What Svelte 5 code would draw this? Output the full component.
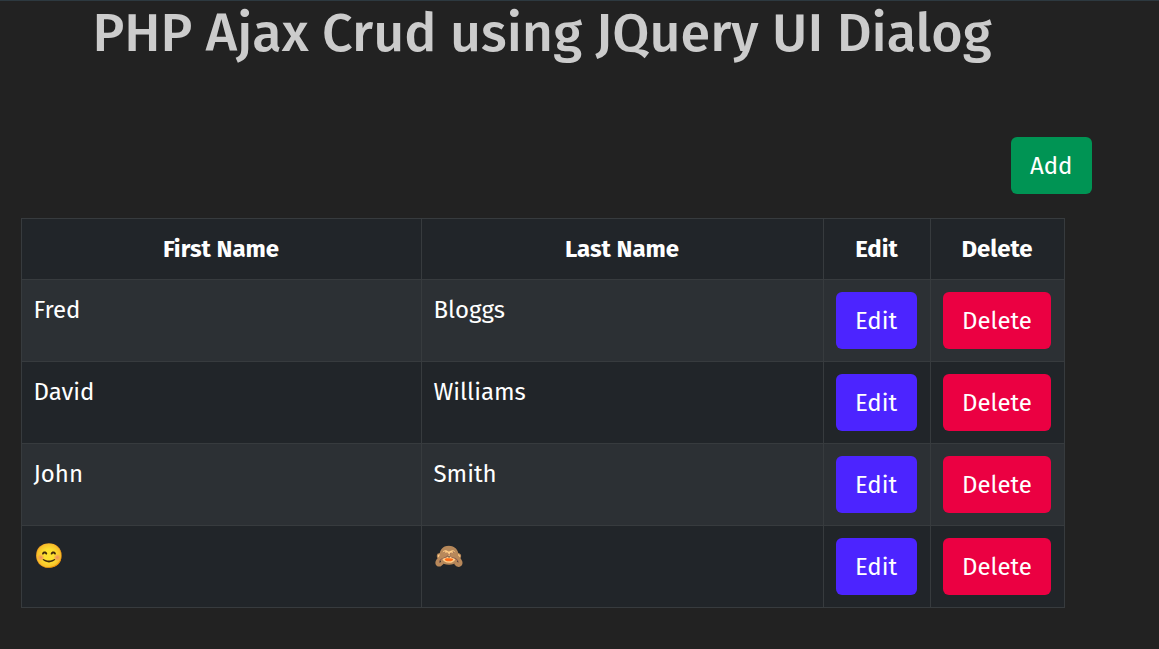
<script>
  const people = [
    { first: 'Fred', last: 'Bloggs' },
    { first: 'David', last: 'Williams' },
    { first: 'John', last: 'Smith' },
    { first: '😊', last: '🙈' }
  ];
</script>

<main>
  <h1>PHP Ajax Crud using JQuery UI Dialog</h1>
  <div class="toolbar"><button class="add">Add</button></div>
  <table>
    <colgroup>
      <col class="c1" /><col class="c2" /><col class="c3" /><col class="c4" />
    </colgroup>
    <thead>
      <tr><th>First Name</th><th>Last Name</th><th>Edit</th><th>Delete</th></tr>
    </thead>
    <tbody>
      {#each people as p}
        <tr>
          <td>{p.first}</td>
          <td>{p.last}</td>
          <td><button class="edit">Edit</button></td>
          <td><button class="delete">Delete</button></td>
        </tr>
      {/each}
    </tbody>
  </table>
</main>

<style>
  :global(body) { background: #222; }
  main {
    box-sizing: border-box;
    height: 649px;
    overflow: hidden;
    border-top: 1px solid #2d3940;
    font: 24px/36px 'Fira Sans', 'Noto Sans', 'Noto Color Emoji', sans-serif;
    color: #fff;
    background: #222;
  }
  h1 {
    margin: 0 0 0 92.5px;
    height: 136px;
    font-size: 53.85px;
    line-height: 64px;
    font-weight: 500;
    color: #ccc;
    white-space: nowrap;
  }
  .toolbar { display: flex; justify-content: flex-end; height: 81px; padding-right: 67px; }
  button {
    display: block;
    box-sizing: border-box;
    height: 57px;
    padding: 0 0.5px 0 0;
    border: 0;
    border-radius: 6px;
    font: inherit;
    color: #fff;
  }
  .add { width: 81px; background: #009454; }
  .edit { width: 81px; padding-right: 1px; background: #4c24ff; }
  .delete { width: 108px; padding-right: 0; background: #eb0042; }
  table {
    width: 1044px;
    margin-left: 21px;
    border-collapse: separate;
    border-spacing: 0;
    table-layout: fixed;
    border-top: 1px solid #373b3e;
    border-left: 1px solid #373b3e;
    background: #212529;
  }
  .c1 { width: 400px; }
  .c2 { width: 402px; }
  .c3 { width: 107px; }
  .c4 { width: 134px; }
  th, td {
    box-sizing: border-box;
    padding: 12px;
    border-right: 1px solid #373b3e;
    border-bottom: 1px solid #373b3e;
    vertical-align: top;
  }
  th { height: 61px; padding-right: 13px; font-weight: 700; text-align: center; }
  td { height: 82px; text-align: left; }
  td:nth-child(-n + 2) { padding-left: 11.5px; }
  tr:last-child td:nth-child(-n + 2) { padding-left: 12px; }
  tbody tr:nth-child(odd) { background: #2c3034; }
</style>
